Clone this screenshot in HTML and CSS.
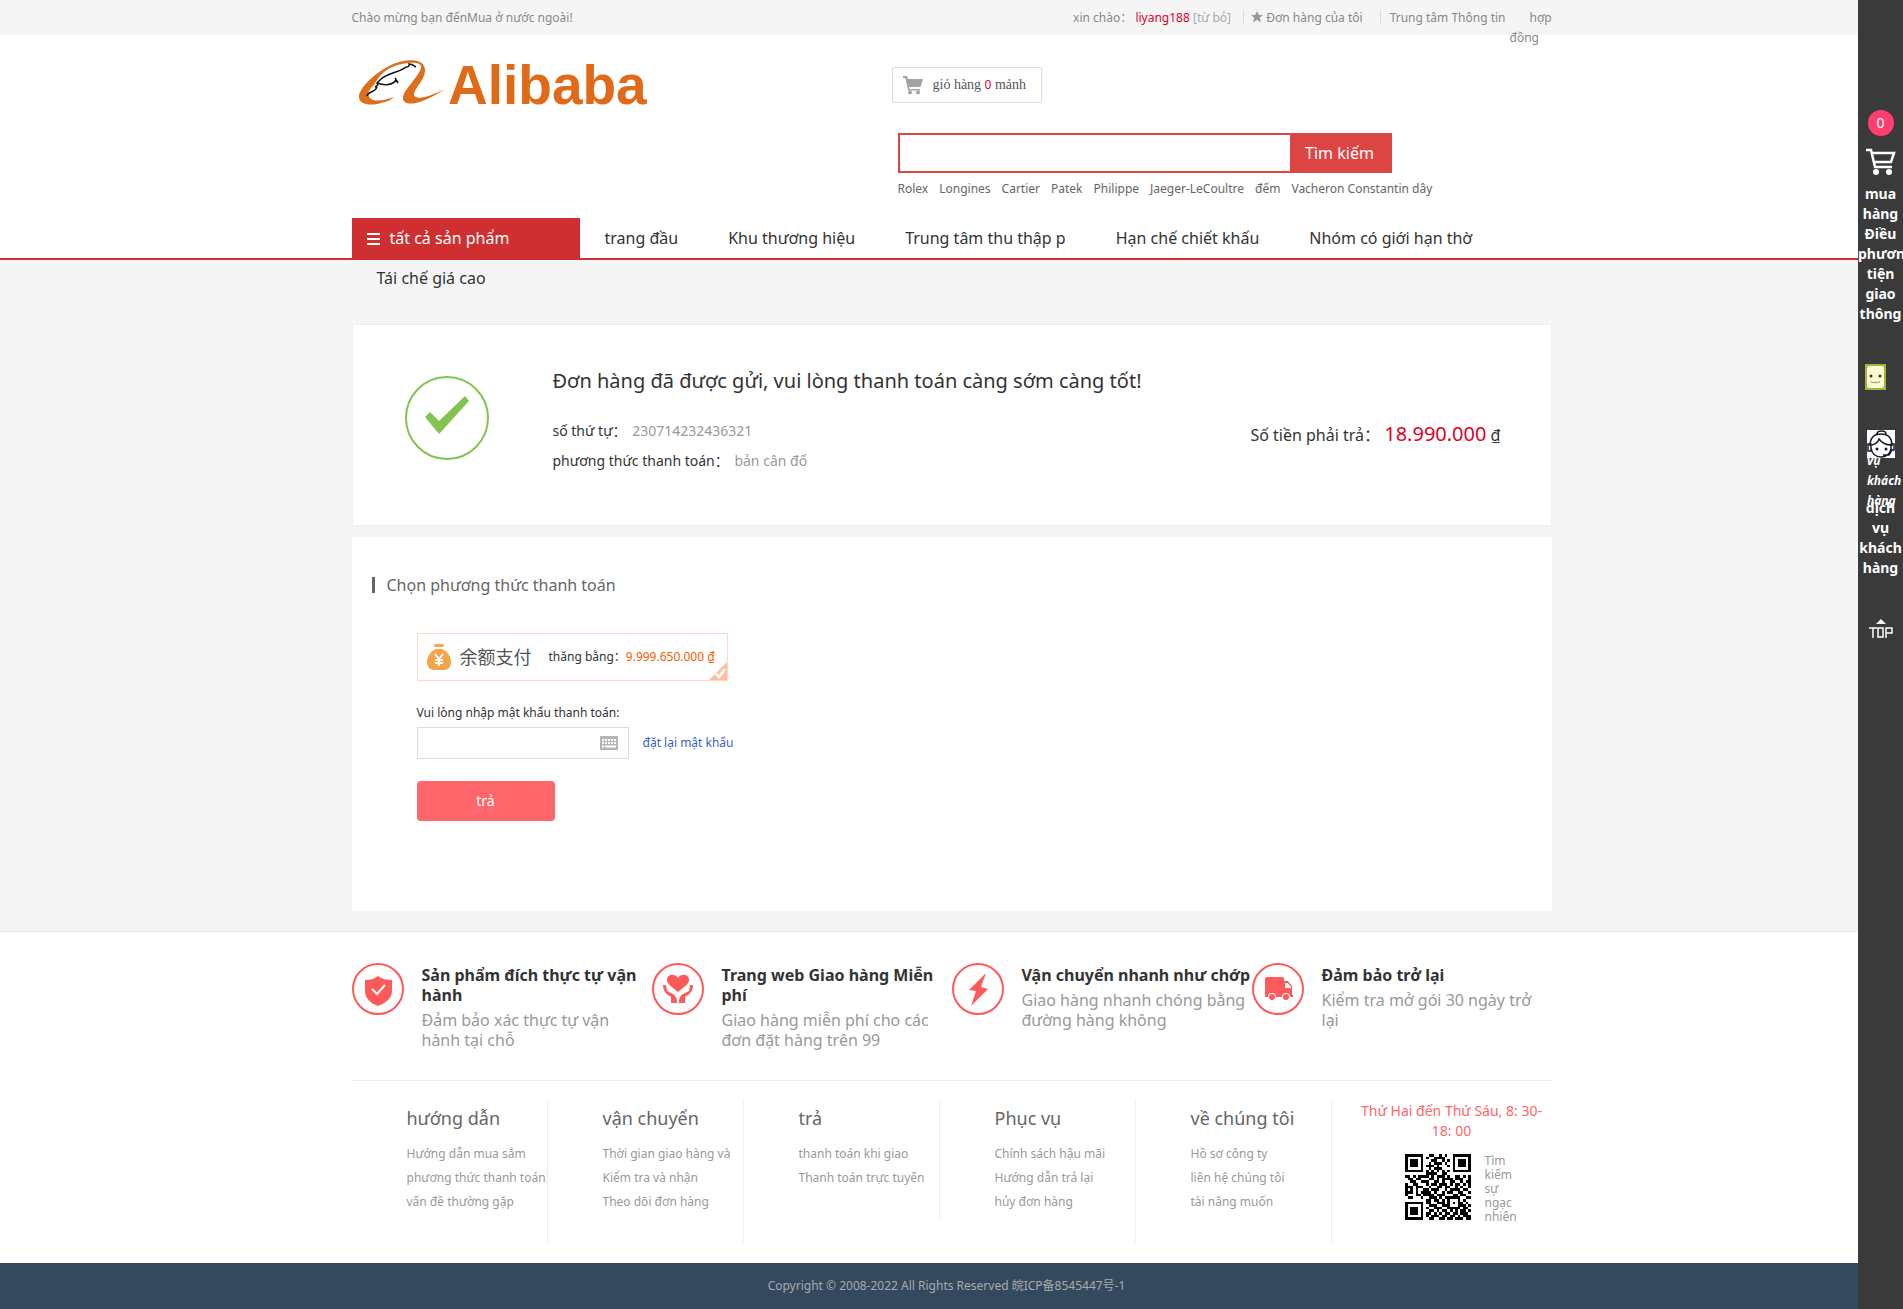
FILE: index.html
```html
<!DOCTYPE html>
<html lang="vi">
<head>
<meta charset="utf-8">
<title>Thanh toán đơn hàng</title>
<link rel="stylesheet" href="styles.css">
</head>
<body>
<div class="topbar">
  <div class="wrap topbar-row">
    <p>Chào mừng bạn đếnMua ở nước ngoài!</p>
    <ul class="top-links">
      <li>xin chào： <a class="user" href="#">liyang188</a> <a class="quit" href="#">[từ bỏ]</a></li>
      <li class="ruled"><a href="#"><svg class="star" viewBox="0 0 12 12"><path d="M6 0l1.800 4H12L8.700 6.700 10 11.500 6 8.800 2 11.500l1.300-4.800L0 4h4.200z"/></svg> Đơn hàng của tôi</a></li>
      <li class="ruled info"><a href="#">Trung tâm Thông tin</a></li>
      <li class="contract"><a href="#">hợp đồng</a></li>
    </ul>
  </div>
</div>

<header class="wrap header">
  <a class="logo" href="#" aria-label="Alibaba">
    <svg viewBox="0 0 300 58" width="300" height="58">
      <path fill="#dd6f1c" fill-rule="evenodd" d="M72 13C68 5 50 6 37 13 20 22 7 36 7 44c0 8 12 9 22 6 6-1 10-3 13-6-8 3-18 5-23 2-5-4-2-10 3-14 6-12 16-20 34-22 8-1 14 0 13 5-3 10-18 22-18 30 0 9 17 8 42-9-14 7-29 12-31 6 0-8 15-18 10-29z"/>
      <path fill="none" stroke="#111" stroke-width="1.500" d="M64 14c-2-1-3-3-7-3 1 2-1 3-3 3-5 5-20 6-26 13l-3 3c2 1 0 3-2 4M25 30c8 3 16 2 19-3m-1-2l3 5M25 34c-2 6-9 4-10 9"/>
      <text class="logo-text" x="96" y="51">Alibaba</text>
    </svg>
  </a>
  <div class="header-tools">
    <a class="cart" href="#">
      <svg viewBox="0 0 20 20" width="20" height="20"><path fill="#a3a3a3" d="M0 1h4l1 3h15l-2.500 8H6l.5 2H17v1.500H5L2.500 3H0z"/><circle cx="7" cy="17.500" r="2" fill="#a3a3a3"/><circle cx="15" cy="17.500" r="2" fill="#a3a3a3"/></svg>
      <span>giỏ hàng <b>0</b> mảnh</span>
    </a>
    <form class="search">
      <input type="text" aria-label="Tìm kiếm">
      <button type="button">Tìm kiếm</button>
    </form>
    <p class="keywords"><a href="#">Rolex</a><a href="#">Longines</a><a href="#">Cartier</a><a href="#">Patek</a><a href="#">Philippe</a><a href="#">Jaeger-LeCoultre</a><a href="#">đếm</a><a href="#">Vacheron Constantin dây</a></p>
  </div>
</header>

<nav class="nav">
  <ul class="wrap nav-list">
    <li class="all"><a href="#"><svg viewBox="0 0 13 13" width="13" height="13"><path fill="#fff" d="M0 1h13v2H0zM0 6h13v2H0zM0 11h13v2H0z"/></svg>tất cả sản phẩm</a></li>
    <li><a href="#">trang đầu</a></li>
    <li><a href="#">Khu thương hiệu</a></li>
    <li><a href="#">Trung tâm thu thập p</a></li>
    <li><a href="#">Hạn chế chiết khấu</a></li>
    <li><a href="#">Nhóm có giới hạn thờ</a></li>
    <li><a href="#">Tái chế giá cao</a></li>
  </ul>
</nav>

<main class="main">
  <section class="wrap result">
    <svg class="tick" viewBox="0 0 84 84" width="84" height="84"><circle cx="42" cy="42" r="41" fill="none" stroke="#82c44f" stroke-width="2"/><path fill="#82c44f" d="M20 41l5-5 9 9 26-25 4 5-30 33z"/></svg>
    <div class="order">
      <h1>Đơn hàng đã được gửi, vui lòng thanh toán càng sớm càng tốt!</h1>
      <p>số thứ tự： <span>230714232436321</span></p>
      <p>phương thức thanh toán： <span>bản cân đố</span></p>
    </div>
    <p class="due">Số tiền phải trả： <strong>18.990.000</strong> ₫</p>
  </section>

  <section class="wrap pay">
    <h2>Chọn phương thức thanh toán</h2>
    <form class="pay-form">
      <div class="method">
        <svg viewBox="0 0 24 28" width="24" height="28"><rect x="7" y="1" width="10" height="3" rx="1.500" fill="#f8a54a"/><path fill="#f8a54a" d="M9 6h6c5 2 9 7 9 13 0 5-3 8-7 8H7c-4 0-7-3-7-8C0 13 4 8 9 6z"/><path fill="none" stroke="#fff" stroke-width="2" d="M8 11l4 5 4-5M12 15v8M8 17h8M8 20h8"/></svg>
        <b>余额支付</b>
        <span>thăng bằng：<em>9.999.650.000 ₫</em></span>
        <svg class="corner" viewBox="0 0 18 18" width="18" height="18"><path fill="#ffbf9d" d="M18 0v18H0z"/><path fill="none" stroke="#fff" stroke-width="2.500" d="M7 12l3 3 6-8"/></svg>
      </div>
      <label for="pwd">Vui lòng nhập mật khẩu thanh toán:</label>
      <div class="pwd-row">
        <div class="pwd">
          <input id="pwd" type="password">
          <svg viewBox="0 0 18 14" width="18" height="14"><rect width="18" height="14" rx="1" fill="#b5b5b5"/><path stroke="#fff" stroke-width="2" stroke-dasharray="2 1" d="M2 4h14M2 7h14"/><path stroke="#fff" stroke-width="2" d="M2 10.500h2M5 10.500h11"/></svg>
        </div>
        <a href="#">đặt lại mật khẩu</a>
      </div>
      <button type="button">trả</button>
    </form>
  </section>
</main>

<footer class="footer">
  <ul class="wrap services">
    <li>
      <svg viewBox="0 0 52 52" width="52" height="52"><circle cx="26" cy="26" r="25"/><path class="fill" d="M26 13c4 3 9 4 14 4v11c0 7-6 12-14 15-8-3-13-8-13-15V17c5 0 9-1 13-4z"/><path class="white" d="M20 26l5 5 8-9"/></svg>
      <div><h3>Sản phẩm đích thực tự vận hành</h3><p>Đảm bảo xác thực tự vận hành tại chỗ</p></div>
    </li>
    <li>
      <svg viewBox="0 0 52 52" width="52" height="52"><circle cx="26" cy="26" r="25"/><path class="fill" d="M26 29C20 24 15 21 15 17c0-6 8-7 11-2 3-5 11-4 11 2 0 4-5 7-11 12zM11 22h3l1 6 6 3c3 2 4 4 4 9h-6v-6c-5-3-8-6-8-12zM41 22h-3l-1 6-6 3c-3 2-4 4-4 9h6v-6c5-3 8-6 8-12z"/></svg>
      <div><h3>Trang web Giao hàng Miễn phí</h3><p>Giao hàng miễn phí cho các đơn đặt hàng trên 99</p></div>
    </li>
    <li>
      <svg viewBox="0 0 52 52" width="52" height="52"><circle cx="26" cy="26" r="25"/><path class="fill" d="M34 10L17 27l7 1-5 15 17-17-7-2z"/></svg>
      <div><h3>Vận chuyển nhanh như chớp</h3><p>Giao hàng nhanh chóng bằng đường hàng không</p></div>
    </li>
    <li>
      <svg viewBox="0 0 52 52" width="52" height="52"><circle cx="26" cy="26" r="25"/><path class="fill" d="M13 16q0-2 2-2h15q2 0 2 2v2h4l4 5v8l1 1v2h-3a4 4 0 0 0-8 0h-6a4 4 0 0 0-8 0h-3z"/><path fill="#fff" d="M33 20h3l3 4v1h-6z"/><circle class="fill" cx="20" cy="34" r="3"/><circle class="fill" cx="34" cy="34" r="3"/></svg>
      <div><h3>Đảm bảo trở lại</h3><p>Kiểm tra mở gói 30 ngày trở lại</p></div>
    </li>
  </ul>
  <div class="wrap links">
    <dl><dt>hướng dẫn</dt><dd><a href="#">Hướng dẫn mua sắm</a></dd><dd><a href="#">phương thức thanh toán</a></dd><dd><a href="#">vấn đề thường gặp</a></dd></dl>
    <dl><dt>vận chuyển</dt><dd><a href="#">Thời gian giao hàng và</a></dd><dd><a href="#">Kiểm tra và nhận</a></dd><dd><a href="#">Theo dõi đơn hàng</a></dd></dl>
    <dl><dt>trả</dt><dd><a href="#">thanh toán khi giao</a></dd><dd><a href="#">Thanh toán trực tuyến</a></dd></dl>
    <dl><dt>Phục vụ</dt><dd><a href="#">Chính sách hậu mãi</a></dd><dd><a href="#">Hướng dẫn trả lại</a></dd><dd><a href="#">hủy đơn hàng</a></dd></dl>
    <dl><dt>về chúng tôi</dt><dd><a href="#">Hồ sơ công ty</a></dd><dd><a href="#">liên hệ chúng tôi</a></dd><dd><a href="#">tài năng muốn</a></dd></dl>
    <div class="contact">
      <p class="hours">Thứ Hai đến Thứ Sáu, 8: 30-18: 00</p>
      <div class="scan"><svg id="qr" viewBox="0 0 25 25" width="66" height="66" shape-rendering="crispEdges"></svg><p>Tìm kiếm sự ngạc nhiên</p></div>
    </div>
  </div>
  <p class="copyright">Copyright © 2008-2022 All Rights Reserved 皖ICP备8545447号-1</p>
</footer>

<aside class="side">
  <a class="side-cart" href="#">
    <b>0</b>
    <svg viewBox="0 0 30 27" width="30" height="27"><path fill="none" stroke="#fff" stroke-width="2.500" d="M0 2h5l4 17h17M6 5h22l-3 9H8"/><circle cx="10" cy="24" r="3" fill="#fff"/><circle cx="23" cy="24" r="3" fill="#fff"/></svg>
    <span>mua hàng Điều phương tiện giao thông</span>
  </a>
  <svg class="face" viewBox="0 0 21 26" width="21" height="26"><path fill="#9cb83c" d="M0 0h21v26H0z"/><rect x="2" y="2" width="17" height="22" rx="2" fill="#fffbd0"/><circle cx="6" cy="12" r="1.500" fill="#333"/><circle cx="15" cy="12" r="1.500" fill="#333"/><path fill="none" stroke="#8a8a70" d="M6 17q1 3 3 1 1 2 3 0 2 2 3-1"/></svg>
  <a class="service" href="#">
    <em>dịch vụ khách hàng</em>
    <svg viewBox="0 0 28 28" width="28" height="28"><path fill="#fff" d="M0 0h28v28H0z"/><path fill="none" stroke="#1d1830" stroke-width="1.500" d="M3 16C3 7 8 4 14 4s11 3 11 12M10 4c0-4 9-4 9 0M4 18c1 6 5 9 10 9s9-3 10-8M5 15c4-1 6-3 7-6 3 4 7 6 12 6M1 14h3v7H1zM24 14h3v6h-3zM25 20l-3 5h-6"/><circle cx="10" cy="19" r="1.500" fill="#1d1830"/><circle cx="19" cy="19" r="1.500" fill="#1d1830"/></svg>
    <span>dịch vụ khách hàng</span>
  </a>
  <a class="to-top" href="#" aria-label="TOP"><svg viewBox="0 0 24 20" width="24" height="20"><path fill="#fff" d="M12 0l5 5H7z"/><path fill="none" stroke="#fff" stroke-width="1.500" d="M0 9h8M4 9v10M9 9h5v9H9zM17 19V9h6v5h-6"/></svg></a>
</aside>
<script src="qr.js"></script>
</body>
</html>
```
FILE: styles.css
```css
* { box-sizing: border-box; margin: 0; padding: 0; }
body { font: 12px/20px "Noto Sans", "Noto Sans CJK SC", sans-serif; color: #333; background: #fff; }
a { color: inherit; text-decoration: none; }
ul { list-style: none; }
svg { display: block; flex: none; }
input, button { font: inherit; border: 0; outline: 0; border-radius: 0; }
.wrap { max-width: 1200px; margin: 0 auto; }

.topbar { height: 35px; background: #f5f5f5; color: #888; }
.topbar-row { display: flex; justify-content: space-between; padding-top: 8px; }
.top-links { display: flex; }
.top-links .user { color: #e4002b; }
.top-links .quit { color: #aaa; }
.ruled { margin-left: 12px; padding-left: 8px; height: 16px; background: linear-gradient(#ddd, #ddd) 0 2px / 1px 14px no-repeat; }
.info { margin-left: 17px; padding-left: 10px; }
.star { display: inline-block; width: 12px; height: 12px; fill: #999; vertical-align: -1px; }
.contract { width: 42px; margin-left: 4px; text-indent: 20px; }

.header { display: flex; justify-content: space-between; padding-bottom: 19px; }
.logo { padding-top: 18px; }
.logo-text { font: bold 55px "Liberation Sans", sans-serif; fill: #e06a17; }
.header-tools { width: 660px; padding-top: 32px; }
.cart { display: flex; align-items: center; gap: 10px; width: 150px; height: 36px; padding-left: 10px; border: 1px solid #ddd; border-radius: 2px; font: 14px/20px "Liberation Serif", serif; color: #555; }
.cart b { font: 12px/20px "Noto Sans", sans-serif; color: #e4002b; }
.search { display: flex; width: 494px; height: 40px; margin: 30px 0 0 6px; border: 2px solid #dd4545; }
.search input { flex: 1; min-width: 0; padding: 0 8px; background: #fff; }
.search button { width: 100px; background: #dd4545; color: #fff; font-size: 16px; }
.keywords { display: flex; gap: 11px; margin: 6px 0 0 6px; color: #666; }

.nav { height: 42px; border-bottom: 2px solid #cf2f30; font-size: 16px; line-height: 40px; }
.nav-list { display: flex; flex-wrap: wrap; }
.nav-list li { padding: 0 25px; }
.nav-list .all { width: 228px; padding: 0 15px; background: #cf2f30; color: #fff; }
.all a { display: flex; align-items: center; gap: 10px; }

.main { padding: 64px 0 20px; background: #f5f5f5; }
.result { display: flex; padding: 41px 50px 49px 52px; background: #fff; border: 1px solid #eee; }
.tick { margin-top: 10px; }
.order { flex: 1; margin-left: 64px; font-size: 14px; line-height: 30px; }
.order h1 { margin-bottom: 20px; font-size: 20px; font-weight: normal; line-height: 30px; }
.order span { margin-left: 2px; color: #999; }
.due { padding-top: 56px; font-size: 16px; line-height: 24px; }
.due strong { font-size: 20px; font-weight: normal; color: #e4001f; }
.pay { min-height: 374px; margin-top: 11px; padding: 38px 20px; background: #fff; }
.pay h2 { display: flex; align-items: center; gap: 12px; font-size: 16px; font-weight: normal; line-height: 20px; color: #666; }
.pay h2::before { content: ""; width: 3px; height: 16px; background: #666; }
.pay-form { padding: 38px 45px 0; }
.method { position: relative; display: flex; align-items: center; width: 311px; height: 48px; padding-left: 9px; border: 1px solid #ffd9c7; }
.method b { margin: 0 17px 0 9px; font-size: 18px; font-weight: normal; color: #555; }
.method em { font-style: normal; color: #ff5a00; }
.corner { position: absolute; right: 0; bottom: 0; }
.pay-form label { display: block; margin-top: 22px; }
.pwd-row { display: flex; align-items: center; gap: 14px; margin-top: 4px; color: #3a5fcd; }
.pwd { display: flex; align-items: center; width: 212px; height: 32px; padding-right: 10px; border: 1px solid #ddd; }
.pwd input { flex: 1; min-width: 0; padding: 0 8px; background: none; }
.pay-form button { width: 138px; height: 40px; margin-top: 22px; border-radius: 4px; background: #ff666b; color: #fff; font-size: 14px; }

.footer { border-top: 1px solid #e8e8e8; }
.services { display: grid; grid-template-columns: repeat(4, 1fr); min-height: 149px; padding-top: 31px; border-bottom: 1px solid #eee; font-size: 16px; }
.services li { display: flex; gap: 18px; }
.services circle { fill: none; stroke: #ff5a5a; stroke-width: 2; }
.services .fill { fill: #ff5a5a; stroke: none; }
.services .white { fill: none; stroke: #fff; stroke-width: 2; }
.services div { width: 230px; padding-top: 2px; }
.services h3 { font-size: 16px; line-height: 20px; }
.services p { margin-top: 5px; color: #999; }
.links { display: flex; align-items: flex-start; padding: 20px 0 21px; }
.links dl { width: 196px; padding: 5px 0 28px 55px; border-right: 1px solid #eee; white-space: nowrap; }
.links dt { margin-bottom: 12px; font-size: 18px; line-height: 24px; color: #666; }
.links dd { line-height: 24px; color: #999; }
.contact { flex: 1; padding-left: 20px; }
.hours { font-size: 14px; text-align: center; color: #ff666b; }
.scan { display: flex; gap: 14px; margin-top: 13px; padding-left: 53px; }
.scan p { width: 34px; font-size: 12px; line-height: 14px; color: #999; }
.copyright { padding: 13px 10px 13px 0; background: #34495e; color: #aaa; text-align: center; }

.side { position: fixed; top: 0; right: 0; bottom: 0; width: 45px; padding-top: 110px; background: #3a3a3a; color: #fff; font-size: 14px; font-weight: bold; display: flex; flex-direction: column; align-items: center; overflow: hidden; }
.side a { display: flex; flex-direction: column; align-items: center; width: 45px; text-align: center; }
.side-cart b { width: 26px; height: 26px; margin-bottom: 12px; border-radius: 50%; background: #ff3d6f; font-weight: normal; line-height: 26px; }
.side-cart span { width: 45px; margin-top: 9px; }
.face { margin: 40px 10px 0 0; }
.service { position: relative; margin-top: 40px; }
.service svg { position: relative; }
.service em { position: absolute; top: 1px; left: 9px; width: 28px; font-size: 12px; text-align: left; }
.service span { margin-top: 40px; }
.to-top { margin-top: 41px; }
```
FILE: qr.js
```
const rows = [
  "1111111001100101001111111",
  "1000001010011110001000001",
  "1011101000110010101011101",
  "1011101001011101001011101",
  "1011101011101000101011101",
  "1000001001011100001000001",
  "1111111010101010101111111",
  "0000000011110011000000000",
  "1101011110101110100110101",
  "0110110001101011110111001",
  "0011001110011010011001011",
  "1001100010110111010110101",
  "1110111001001101100101001",
  "1010100110111001011110110",
  "1110101111010010110011001",
  "1000110111101110001101100",
  "0110001001110101111110011",
  "0000000011011010100010100",
  "1111111011001110101011010",
  "1000001001110011100011101",
  "1011101010011100111110110",
  "1011101001101011010101101",
  "1011101011010101101101110",
  "1000001010111011011010111",
  "1111111001100110110111011"
];
const path = document.createElementNS("http://www.w3.org/2000/svg", "path");
path.setAttribute("d", rows.map((row, y) =>
  [...row].map((cell, x) => cell === "1" ? `M${x} ${y}h1v1h-1z` : "").join("")).join(""));
document.getElementById("qr").append(path);
```
